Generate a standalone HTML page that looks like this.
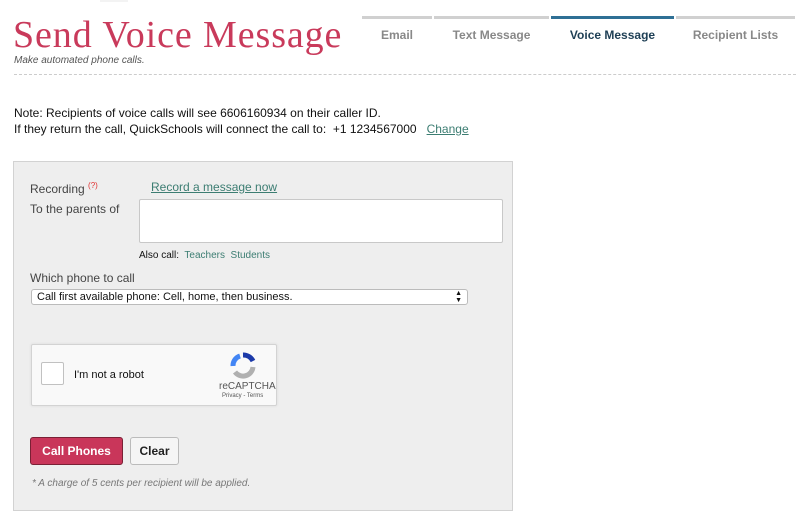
<!DOCTYPE html>
<html><head><style>
body{margin:0;width:809px;height:530px;background:#fff;font-family:"Liberation Sans",sans-serif;position:relative;overflow:hidden;color:#222}
.a{position:absolute}
.tab{position:absolute;top:16px;height:3px;background:#d0d0d0}
.tl{position:absolute;top:28px;font-size:12px;font-weight:bold;color:#888;text-align:center}
a{color:#3c7d72}
</style></head><body>
<div class="a" style="left:100px;top:0;width:28px;height:2px;background:#f3f3f3"></div>
<div class="a" style="left:13px;top:13px;font-family:'Liberation Serif',serif;font-size:38px;color:#c93a5b;letter-spacing:0.9px">Send Voice Message</div>
<div class="a" style="left:14px;top:55px;font-size:10px;font-style:italic;color:#555">Make automated phone calls.</div>
<div class="a" style="left:14px;top:74px;width:782px;border-top:1px dashed #ccc"></div>
<div class="tab" style="left:362px;width:70px"></div>
<div class="tab" style="left:434px;width:115px"></div>
<div class="tab" style="left:551px;width:123px;background:#2f7095"></div>
<div class="tab" style="left:676px;width:119px"></div>
<div class="tl" style="left:362px;width:70px">Email</div>
<div class="tl" style="left:434px;width:115px">Text Message</div>
<div class="tl" style="left:551px;width:123px;color:#1e3f55">Voice Message</div>
<div class="tl" style="left:676px;width:119px">Recipient Lists</div>
<div class="a" style="left:14px;top:105px;font-size:12px;line-height:16px;color:#111">Note: Recipients of voice calls will see 6606160934 on their caller ID.<br>If they return the call, QuickSchools will connect the call to:&nbsp; +1 1234567000 &nbsp;&nbsp;<a style="text-decoration:underline">Change</a></div>
<div class="a" style="left:13px;top:161px;width:498px;height:348px;background:#eeeeee;border:1px solid #d2d2d2"></div>
<div class="a" style="left:30px;top:181px;font-size:12px;color:#444">Recording <sup style="color:#e03030;font-size:8px">(?)</sup></div>
<div class="a" style="left:151px;top:180px;font-size:12px;color:#3c7d72;text-decoration:underline">Record a message now</div>
<div class="a" style="left:30px;top:202px;font-size:12px;color:#444">To the parents of</div>
<div class="a" style="left:139px;top:199px;width:362px;height:42px;background:#fff;border:1px solid #c8c8c8;border-radius:2px"></div>
<div class="a" style="left:139px;top:250px;font-size:10px;color:#111">Also call:&nbsp; <span style="color:#3c7d72">Teachers &nbsp;Students</span></div>
<div class="a" style="left:30px;top:271px;font-size:12px;color:#444">Which phone to call</div>
<div class="a" style="left:31px;top:289px;width:430px;height:14px;background:#fff;border:1px solid #bbb;border-radius:3px;font-size:11px;line-height:14px;color:#111;padding-left:5px;box-sizing:content-box">Call first available phone: Cell, home, then business.<span style="position:absolute;right:5px;top:0;font-size:7px;line-height:7px">&#9650;&#xFE0E;<br>&#9660;&#xFE0E;</span></div>
<div class="a" style="left:31px;top:344px;width:244px;height:60px;background:#f9f9f9;border:1px solid #d3d3d3;border-radius:2px;box-shadow:0 0 3px rgba(0,0,0,.08)"></div>
<div class="a" style="left:41px;top:362px;width:21px;height:21px;background:#fff;border:1px solid #c1c1c1;border-radius:2px"></div>
<div class="a" style="left:74px;top:369px;font-size:11px;color:#111">I'm not a robot</div>
<svg class="a" style="left:229px;top:352px" width="28" height="28" viewBox="0 0 28 28"><path d="M14 3a11 11 0 0 1 10 6" stroke="#1c3aa9" stroke-width="5" fill="none"/><path d="M4 14a10 10 0 0 1 7-10" stroke="#4285f4" stroke-width="5" fill="none"/><path d="M24 15a10 10 0 0 1-18 5" stroke="#b0b0b0" stroke-width="5" fill="none"/></svg>
<div class="a" style="left:219px;top:381px;font-size:10px;color:#555">reCAPTCHA</div>
<div class="a" style="left:222px;top:393px;font-size:6px;color:#555">Privacy - Terms</div>
<div class="a" style="left:30px;top:437px;width:91px;height:26px;background:#c9365a;border:1px solid #7a2035;border-radius:3px;color:#fff;font-size:12px;font-weight:bold;line-height:26px;text-align:center">Call Phones</div>
<div class="a" style="left:130px;top:437px;width:47px;height:26px;background:#f5f5f5;border:1px solid #bbb;border-radius:3px;color:#222;font-size:12px;font-weight:bold;line-height:26px;text-align:center">Clear</div>
<div class="a" style="left:32px;top:478px;font-size:10px;font-style:italic;color:#777">* A charge of 5 cents per recipient will be applied.</div>
</body></html>
